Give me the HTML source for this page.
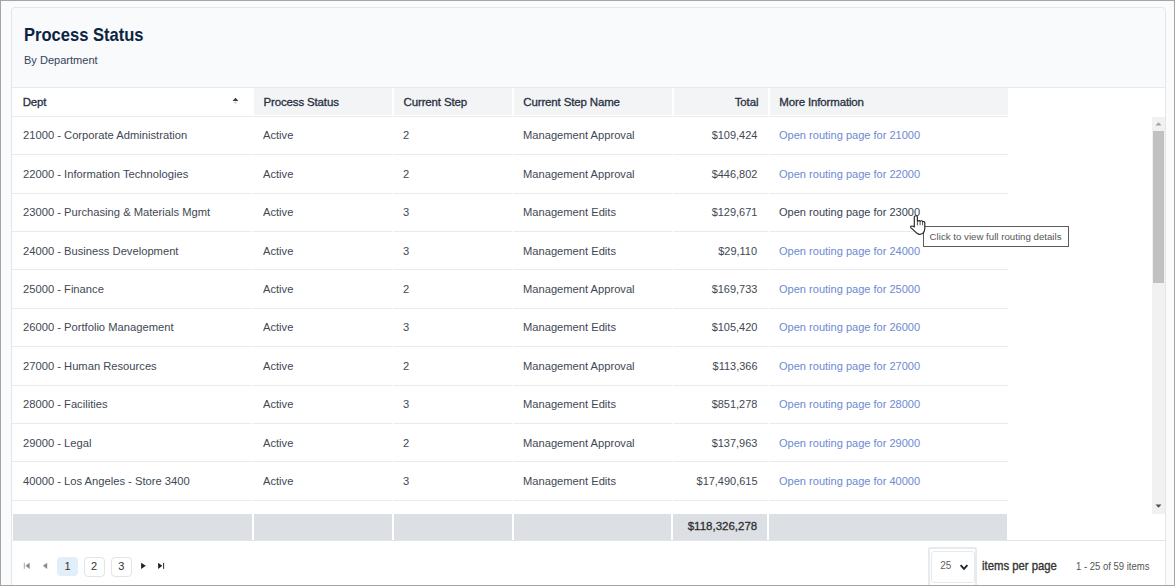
<!DOCTYPE html>
<html><head><meta charset="utf-8"><style>
html,body{margin:0;padding:0}
body{width:1175px;height:586px;position:relative;overflow:hidden;background:#fafbfc;font-family:"Liberation Sans",sans-serif}
.r{position:absolute}
.t{position:absolute;line-height:0;white-space:nowrap}
#frame{position:absolute;left:0;top:0;width:1175px;height:586px;box-sizing:border-box;border:1px solid #a4a4a4;pointer-events:none}
</style></head><body>
<div class="r" style="left:11px;top:7px;width:1155px;height:620px;border:1px solid #e3e6ea;border-radius:4px;background:#f9fafb;box-sizing:border-box"></div>
<div class="t" style="left:23.90px;top:34.72px;font-size:19px;color:#0c2442;font-weight:bold;transform:scaleX(0.87);transform-origin:left center;">Process Status</div>
<div class="t" style="left:24.20px;top:60.02px;font-size:11.5px;color:#33425a;transform:scaleX(0.96);transform-origin:left center;">By Department</div>
<div class="r" style="left:12px;top:87px;width:1153px;height:500px;background:#ffffff;"></div>
<div class="r" style="left:12px;top:87px;width:1153px;height:1px;background:#e8eaee;"></div>
<div class="r" style="left:254px;top:88px;width:138px;height:27px;background:#f3f4f6;"></div>
<div class="r" style="left:394px;top:88px;width:118px;height:27px;background:#f3f4f6;"></div>
<div class="r" style="left:514px;top:88px;width:158px;height:27px;background:#f3f4f6;"></div>
<div class="r" style="left:674px;top:88px;width:94px;height:27px;background:#f3f4f6;"></div>
<div class="r" style="left:770px;top:88px;width:238px;height:27px;background:#f3f4f6;"></div>
<div class="r" style="left:12px;top:116px;width:240px;height:1px;background:#e8eaee;"></div>
<div class="r" style="left:253px;top:116px;width:139px;height:1px;background:#e8eaee;"></div>
<div class="r" style="left:393px;top:116px;width:119px;height:1px;background:#e8eaee;"></div>
<div class="r" style="left:513px;top:116px;width:159px;height:1px;background:#e8eaee;"></div>
<div class="r" style="left:673px;top:116px;width:95px;height:1px;background:#e8eaee;"></div>
<div class="r" style="left:769px;top:116px;width:239px;height:1px;background:#e8eaee;"></div>
<div class="t" style="left:22.70px;top:101.62px;font-size:11.5px;color:#283040;letter-spacing:-0.15px;-webkit-text-stroke:0.3px #283040;">Dept</div>
<div class="t" style="left:263.50px;top:101.62px;font-size:11.5px;color:#283040;letter-spacing:-0.15px;-webkit-text-stroke:0.3px #283040;">Process Status</div>
<div class="t" style="left:403.60px;top:101.62px;font-size:11.5px;color:#283040;letter-spacing:-0.15px;-webkit-text-stroke:0.3px #283040;">Current Step</div>
<div class="t" style="left:523.30px;top:101.62px;font-size:11.5px;color:#283040;letter-spacing:-0.15px;-webkit-text-stroke:0.3px #283040;">Current Step Name</div>
<div class="t" style="right:416.70px;top:101.62px;font-size:11.5px;color:#283040;text-align:right;letter-spacing:-0.15px;-webkit-text-stroke:0.3px #283040;">Total</div>
<div class="t" style="left:779.30px;top:101.62px;font-size:11.5px;color:#283040;letter-spacing:-0.15px;-webkit-text-stroke:0.3px #283040;">More Information</div>
<svg class="r" style="left:231px;top:96px" width="9" height="10" viewBox="0 0 9 10"><path d="M1.6 5 L4.5 1.8 L7.4 5 Z" fill="#3a3a3a"/><path d="M2.2 5.7 L6.8 5.7 L4.5 8.2 Z" fill="#d6d6d6"/></svg>
<div class="r" style="left:12px;top:154px;width:240px;height:1px;background:#e8eaee;"></div>
<div class="r" style="left:253px;top:154px;width:139px;height:1px;background:#e8eaee;"></div>
<div class="r" style="left:393px;top:154px;width:119px;height:1px;background:#e8eaee;"></div>
<div class="r" style="left:513px;top:154px;width:159px;height:1px;background:#e8eaee;"></div>
<div class="r" style="left:673px;top:154px;width:95px;height:1px;background:#e8eaee;"></div>
<div class="r" style="left:769px;top:154px;width:239px;height:1px;background:#e8eaee;"></div>
<div class="t" style="left:22.70px;top:135.48px;font-size:11.6px;color:#414853;transform:scaleX(0.965);transform-origin:left center;">21000 - Corporate Administration</div>
<div class="t" style="left:262.50px;top:135.48px;font-size:11.6px;color:#414853;transform:scaleX(0.962);transform-origin:left center;">Active</div>
<div class="t" style="left:402.80px;top:135.48px;font-size:11.6px;color:#414853;transform:scaleX(0.962);transform-origin:left center;">2</div>
<div class="t" style="left:522.90px;top:135.48px;font-size:11.6px;color:#414853;transform:scaleX(0.962);transform-origin:left center;">Management Approval</div>
<div class="t" style="right:417.60px;top:135.48px;font-size:11.6px;color:#414853;text-align:right;transform:scaleX(0.945);transform-origin:right center;">$109,424</div>
<div class="t" style="left:778.60px;top:135.48px;font-size:11.6px;color:#6d8ad2;transform:scaleX(0.952);transform-origin:left center;">Open routing page for 21000</div>
<div class="r" style="left:12px;top:193px;width:240px;height:1px;background:#e8eaee;"></div>
<div class="r" style="left:253px;top:193px;width:139px;height:1px;background:#e8eaee;"></div>
<div class="r" style="left:393px;top:193px;width:119px;height:1px;background:#e8eaee;"></div>
<div class="r" style="left:513px;top:193px;width:159px;height:1px;background:#e8eaee;"></div>
<div class="r" style="left:673px;top:193px;width:95px;height:1px;background:#e8eaee;"></div>
<div class="r" style="left:769px;top:193px;width:239px;height:1px;background:#e8eaee;"></div>
<div class="t" style="left:22.70px;top:173.86px;font-size:11.6px;color:#414853;transform:scaleX(0.965);transform-origin:left center;">22000 - Information Technologies</div>
<div class="t" style="left:262.50px;top:173.86px;font-size:11.6px;color:#414853;transform:scaleX(0.962);transform-origin:left center;">Active</div>
<div class="t" style="left:402.80px;top:173.86px;font-size:11.6px;color:#414853;transform:scaleX(0.962);transform-origin:left center;">2</div>
<div class="t" style="left:522.90px;top:173.86px;font-size:11.6px;color:#414853;transform:scaleX(0.962);transform-origin:left center;">Management Approval</div>
<div class="t" style="right:417.60px;top:173.86px;font-size:11.6px;color:#414853;text-align:right;transform:scaleX(0.945);transform-origin:right center;">$446,802</div>
<div class="t" style="left:778.60px;top:173.86px;font-size:11.6px;color:#6d8ad2;transform:scaleX(0.952);transform-origin:left center;">Open routing page for 22000</div>
<div class="r" style="left:12px;top:231px;width:240px;height:1px;background:#e8eaee;"></div>
<div class="r" style="left:253px;top:231px;width:139px;height:1px;background:#e8eaee;"></div>
<div class="r" style="left:393px;top:231px;width:119px;height:1px;background:#e8eaee;"></div>
<div class="r" style="left:513px;top:231px;width:159px;height:1px;background:#e8eaee;"></div>
<div class="r" style="left:673px;top:231px;width:95px;height:1px;background:#e8eaee;"></div>
<div class="r" style="left:769px;top:231px;width:239px;height:1px;background:#e8eaee;"></div>
<div class="t" style="left:22.70px;top:212.24px;font-size:11.6px;color:#414853;transform:scaleX(0.965);transform-origin:left center;">23000 - Purchasing &amp; Materials Mgmt</div>
<div class="t" style="left:262.50px;top:212.24px;font-size:11.6px;color:#414853;transform:scaleX(0.962);transform-origin:left center;">Active</div>
<div class="t" style="left:402.80px;top:212.24px;font-size:11.6px;color:#414853;transform:scaleX(0.962);transform-origin:left center;">3</div>
<div class="t" style="left:522.90px;top:212.24px;font-size:11.6px;color:#414853;transform:scaleX(0.962);transform-origin:left center;">Management Edits</div>
<div class="t" style="right:417.60px;top:212.24px;font-size:11.6px;color:#414853;text-align:right;transform:scaleX(0.945);transform-origin:right center;">$129,671</div>
<div class="t" style="left:778.60px;top:212.24px;font-size:11.6px;color:#374253;transform:scaleX(0.952);transform-origin:left center;">Open routing page for 23000</div>
<div class="r" style="left:12px;top:269px;width:240px;height:1px;background:#e8eaee;"></div>
<div class="r" style="left:253px;top:269px;width:139px;height:1px;background:#e8eaee;"></div>
<div class="r" style="left:393px;top:269px;width:119px;height:1px;background:#e8eaee;"></div>
<div class="r" style="left:513px;top:269px;width:159px;height:1px;background:#e8eaee;"></div>
<div class="r" style="left:673px;top:269px;width:95px;height:1px;background:#e8eaee;"></div>
<div class="r" style="left:769px;top:269px;width:239px;height:1px;background:#e8eaee;"></div>
<div class="t" style="left:22.70px;top:250.62px;font-size:11.6px;color:#414853;transform:scaleX(0.965);transform-origin:left center;">24000 - Business Development</div>
<div class="t" style="left:262.50px;top:250.62px;font-size:11.6px;color:#414853;transform:scaleX(0.962);transform-origin:left center;">Active</div>
<div class="t" style="left:402.80px;top:250.62px;font-size:11.6px;color:#414853;transform:scaleX(0.962);transform-origin:left center;">3</div>
<div class="t" style="left:522.90px;top:250.62px;font-size:11.6px;color:#414853;transform:scaleX(0.962);transform-origin:left center;">Management Edits</div>
<div class="t" style="right:417.60px;top:250.62px;font-size:11.6px;color:#414853;text-align:right;transform:scaleX(0.945);transform-origin:right center;">$29,110</div>
<div class="t" style="left:778.60px;top:250.62px;font-size:11.6px;color:#6d8ad2;transform:scaleX(0.952);transform-origin:left center;">Open routing page for 24000</div>
<div class="r" style="left:12px;top:308px;width:240px;height:1px;background:#e8eaee;"></div>
<div class="r" style="left:253px;top:308px;width:139px;height:1px;background:#e8eaee;"></div>
<div class="r" style="left:393px;top:308px;width:119px;height:1px;background:#e8eaee;"></div>
<div class="r" style="left:513px;top:308px;width:159px;height:1px;background:#e8eaee;"></div>
<div class="r" style="left:673px;top:308px;width:95px;height:1px;background:#e8eaee;"></div>
<div class="r" style="left:769px;top:308px;width:239px;height:1px;background:#e8eaee;"></div>
<div class="t" style="left:22.70px;top:289.00px;font-size:11.6px;color:#414853;transform:scaleX(0.965);transform-origin:left center;">25000 - Finance</div>
<div class="t" style="left:262.50px;top:289.00px;font-size:11.6px;color:#414853;transform:scaleX(0.962);transform-origin:left center;">Active</div>
<div class="t" style="left:402.80px;top:289.00px;font-size:11.6px;color:#414853;transform:scaleX(0.962);transform-origin:left center;">2</div>
<div class="t" style="left:522.90px;top:289.00px;font-size:11.6px;color:#414853;transform:scaleX(0.962);transform-origin:left center;">Management Approval</div>
<div class="t" style="right:417.60px;top:289.00px;font-size:11.6px;color:#414853;text-align:right;transform:scaleX(0.945);transform-origin:right center;">$169,733</div>
<div class="t" style="left:778.60px;top:289.00px;font-size:11.6px;color:#6d8ad2;transform:scaleX(0.952);transform-origin:left center;">Open routing page for 25000</div>
<div class="r" style="left:12px;top:346px;width:240px;height:1px;background:#e8eaee;"></div>
<div class="r" style="left:253px;top:346px;width:139px;height:1px;background:#e8eaee;"></div>
<div class="r" style="left:393px;top:346px;width:119px;height:1px;background:#e8eaee;"></div>
<div class="r" style="left:513px;top:346px;width:159px;height:1px;background:#e8eaee;"></div>
<div class="r" style="left:673px;top:346px;width:95px;height:1px;background:#e8eaee;"></div>
<div class="r" style="left:769px;top:346px;width:239px;height:1px;background:#e8eaee;"></div>
<div class="t" style="left:22.70px;top:327.38px;font-size:11.6px;color:#414853;transform:scaleX(0.965);transform-origin:left center;">26000 - Portfolio Management</div>
<div class="t" style="left:262.50px;top:327.38px;font-size:11.6px;color:#414853;transform:scaleX(0.962);transform-origin:left center;">Active</div>
<div class="t" style="left:402.80px;top:327.38px;font-size:11.6px;color:#414853;transform:scaleX(0.962);transform-origin:left center;">3</div>
<div class="t" style="left:522.90px;top:327.38px;font-size:11.6px;color:#414853;transform:scaleX(0.962);transform-origin:left center;">Management Edits</div>
<div class="t" style="right:417.60px;top:327.38px;font-size:11.6px;color:#414853;text-align:right;transform:scaleX(0.945);transform-origin:right center;">$105,420</div>
<div class="t" style="left:778.60px;top:327.38px;font-size:11.6px;color:#6d8ad2;transform:scaleX(0.952);transform-origin:left center;">Open routing page for 26000</div>
<div class="r" style="left:12px;top:385px;width:240px;height:1px;background:#e8eaee;"></div>
<div class="r" style="left:253px;top:385px;width:139px;height:1px;background:#e8eaee;"></div>
<div class="r" style="left:393px;top:385px;width:119px;height:1px;background:#e8eaee;"></div>
<div class="r" style="left:513px;top:385px;width:159px;height:1px;background:#e8eaee;"></div>
<div class="r" style="left:673px;top:385px;width:95px;height:1px;background:#e8eaee;"></div>
<div class="r" style="left:769px;top:385px;width:239px;height:1px;background:#e8eaee;"></div>
<div class="t" style="left:22.70px;top:365.76px;font-size:11.6px;color:#414853;transform:scaleX(0.965);transform-origin:left center;">27000 - Human Resources</div>
<div class="t" style="left:262.50px;top:365.76px;font-size:11.6px;color:#414853;transform:scaleX(0.962);transform-origin:left center;">Active</div>
<div class="t" style="left:402.80px;top:365.76px;font-size:11.6px;color:#414853;transform:scaleX(0.962);transform-origin:left center;">2</div>
<div class="t" style="left:522.90px;top:365.76px;font-size:11.6px;color:#414853;transform:scaleX(0.962);transform-origin:left center;">Management Approval</div>
<div class="t" style="right:417.60px;top:365.76px;font-size:11.6px;color:#414853;text-align:right;transform:scaleX(0.945);transform-origin:right center;">$113,366</div>
<div class="t" style="left:778.60px;top:365.76px;font-size:11.6px;color:#6d8ad2;transform:scaleX(0.952);transform-origin:left center;">Open routing page for 27000</div>
<div class="r" style="left:12px;top:423px;width:240px;height:1px;background:#e8eaee;"></div>
<div class="r" style="left:253px;top:423px;width:139px;height:1px;background:#e8eaee;"></div>
<div class="r" style="left:393px;top:423px;width:119px;height:1px;background:#e8eaee;"></div>
<div class="r" style="left:513px;top:423px;width:159px;height:1px;background:#e8eaee;"></div>
<div class="r" style="left:673px;top:423px;width:95px;height:1px;background:#e8eaee;"></div>
<div class="r" style="left:769px;top:423px;width:239px;height:1px;background:#e8eaee;"></div>
<div class="t" style="left:22.70px;top:404.14px;font-size:11.6px;color:#414853;transform:scaleX(0.965);transform-origin:left center;">28000 - Facilities</div>
<div class="t" style="left:262.50px;top:404.14px;font-size:11.6px;color:#414853;transform:scaleX(0.962);transform-origin:left center;">Active</div>
<div class="t" style="left:402.80px;top:404.14px;font-size:11.6px;color:#414853;transform:scaleX(0.962);transform-origin:left center;">3</div>
<div class="t" style="left:522.90px;top:404.14px;font-size:11.6px;color:#414853;transform:scaleX(0.962);transform-origin:left center;">Management Edits</div>
<div class="t" style="right:417.60px;top:404.14px;font-size:11.6px;color:#414853;text-align:right;transform:scaleX(0.945);transform-origin:right center;">$851,278</div>
<div class="t" style="left:778.60px;top:404.14px;font-size:11.6px;color:#6d8ad2;transform:scaleX(0.952);transform-origin:left center;">Open routing page for 28000</div>
<div class="r" style="left:12px;top:461px;width:240px;height:1px;background:#e8eaee;"></div>
<div class="r" style="left:253px;top:461px;width:139px;height:1px;background:#e8eaee;"></div>
<div class="r" style="left:393px;top:461px;width:119px;height:1px;background:#e8eaee;"></div>
<div class="r" style="left:513px;top:461px;width:159px;height:1px;background:#e8eaee;"></div>
<div class="r" style="left:673px;top:461px;width:95px;height:1px;background:#e8eaee;"></div>
<div class="r" style="left:769px;top:461px;width:239px;height:1px;background:#e8eaee;"></div>
<div class="t" style="left:22.70px;top:442.52px;font-size:11.6px;color:#414853;transform:scaleX(0.965);transform-origin:left center;">29000 - Legal</div>
<div class="t" style="left:262.50px;top:442.52px;font-size:11.6px;color:#414853;transform:scaleX(0.962);transform-origin:left center;">Active</div>
<div class="t" style="left:402.80px;top:442.52px;font-size:11.6px;color:#414853;transform:scaleX(0.962);transform-origin:left center;">2</div>
<div class="t" style="left:522.90px;top:442.52px;font-size:11.6px;color:#414853;transform:scaleX(0.962);transform-origin:left center;">Management Approval</div>
<div class="t" style="right:417.60px;top:442.52px;font-size:11.6px;color:#414853;text-align:right;transform:scaleX(0.945);transform-origin:right center;">$137,963</div>
<div class="t" style="left:778.60px;top:442.52px;font-size:11.6px;color:#6d8ad2;transform:scaleX(0.952);transform-origin:left center;">Open routing page for 29000</div>
<div class="r" style="left:12px;top:500px;width:240px;height:1px;background:#e8eaee;"></div>
<div class="r" style="left:253px;top:500px;width:139px;height:1px;background:#e8eaee;"></div>
<div class="r" style="left:393px;top:500px;width:119px;height:1px;background:#e8eaee;"></div>
<div class="r" style="left:513px;top:500px;width:159px;height:1px;background:#e8eaee;"></div>
<div class="r" style="left:673px;top:500px;width:95px;height:1px;background:#e8eaee;"></div>
<div class="r" style="left:769px;top:500px;width:239px;height:1px;background:#e8eaee;"></div>
<div class="t" style="left:22.70px;top:480.90px;font-size:11.6px;color:#414853;transform:scaleX(0.965);transform-origin:left center;">40000 - Los Angeles - Store 3400</div>
<div class="t" style="left:262.50px;top:480.90px;font-size:11.6px;color:#414853;transform:scaleX(0.962);transform-origin:left center;">Active</div>
<div class="t" style="left:402.80px;top:480.90px;font-size:11.6px;color:#414853;transform:scaleX(0.962);transform-origin:left center;">3</div>
<div class="t" style="left:522.90px;top:480.90px;font-size:11.6px;color:#414853;transform:scaleX(0.962);transform-origin:left center;">Management Edits</div>
<div class="t" style="right:417.60px;top:480.90px;font-size:11.6px;color:#414853;text-align:right;transform:scaleX(0.945);transform-origin:right center;">$17,490,615</div>
<div class="t" style="left:778.60px;top:480.90px;font-size:11.6px;color:#6d8ad2;transform:scaleX(0.952);transform-origin:left center;">Open routing page for 40000</div>
<div class="r" style="left:13px;top:514px;width:239px;height:26px;background:#dcdfe4;"></div>
<div class="r" style="left:254px;top:514px;width:138px;height:26px;background:#dcdfe4;"></div>
<div class="r" style="left:394px;top:514px;width:118px;height:26px;background:#dcdfe4;"></div>
<div class="r" style="left:514px;top:514px;width:157px;height:26px;background:#dcdfe4;"></div>
<div class="r" style="left:673px;top:514px;width:94px;height:26px;background:#dcdfe4;"></div>
<div class="r" style="left:769px;top:514px;width:238px;height:26px;background:#dcdfe4;"></div>
<div class="t" style="right:417.80px;top:525.82px;font-size:11.5px;color:#2e2e2e;text-align:right;-webkit-text-stroke:0.28px #2e2e2e;">$118,326,278</div>
<div class="r" style="left:12px;top:540px;width:1153px;height:1px;background:#e2e5e9;"></div>
<div class="r" style="left:1152px;top:117px;width:13px;height:397px;background:#f1f1f1;"></div>
<svg class="r" style="left:1152px;top:117px" width="13" height="13" viewBox="0 0 13 13"><path d="M3.5 8.5 L6.5 5.3 L9.5 8.5 Z" fill="#a3a3a3"/></svg>
<div class="r" style="left:1153.4px;top:130.6px;width:10.4px;height:152.3px;background:#c1c1c1;"></div>
<svg class="r" style="left:1152px;top:500px" width="13" height="13" viewBox="0 0 13 13"><path d="M3.5 4.6 L9.5 4.6 L6.5 7.8 Z" fill="#505050"/></svg>
<svg class="r" style="left:22px;top:561px" width="10" height="10" viewBox="0 0 10 10"><path d="M2.3 1.8 V7.9" stroke="#9a9a9a" stroke-width="0.9"/><path d="M7.6 1.8 L3.5 4.85 L7.6 7.9 Z" fill="#8a8a8a"/></svg>
<svg class="r" style="left:41px;top:561px" width="10" height="10" viewBox="0 0 10 10"><path d="M6.2 1.8 L1.9 4.85 L6.2 7.9 Z" fill="#8a8a8a"/></svg>
<div class="r" style="left:57px;top:557px;width:21px;height:19px;background:#e3eefb;border-radius:4px"></div>
<div class="r" style="left:84px;top:557px;width:21px;height:19.5px;border:1px solid #e1e4e9;border-radius:4px;box-sizing:border-box;background:#fff"></div>
<div class="r" style="left:111px;top:557px;width:21px;height:19.5px;border:1px solid #e1e4e9;border-radius:4px;box-sizing:border-box;background:#fff"></div>
<div class="t" style="left:64.50px;top:566.29px;font-size:11px;color:#333;">1</div>
<div class="t" style="left:91.00px;top:566.29px;font-size:11px;color:#333;">2</div>
<div class="t" style="left:118.20px;top:566.29px;font-size:11px;color:#333;">3</div>
<svg class="r" style="left:139px;top:561px" width="10" height="10" viewBox="0 0 10 10"><path d="M2.1 1.8 L6.8 4.85 L2.1 7.9 Z" fill="#1e2128"/></svg>
<svg class="r" style="left:156px;top:561px" width="10" height="10" viewBox="0 0 10 10"><path d="M2.1 1.8 L6.3 4.85 L2.1 7.9 Z" fill="#1e2128"/><path d="M7.6 1.8 V7.9" stroke="#2a2d40" stroke-width="1.0"/></svg>
<div class="r" style="left:928px;top:547px;width:49px;height:45px;border:2px solid #e8ebee;border-radius:2px;box-sizing:border-box;background:#fff"></div>
<div class="r" style="left:931px;top:551px;width:44px;height:32px;border:1px solid #e6e9ed;border-radius:3px;box-sizing:border-box;background:#fff"></div>
<div class="t" style="left:940.30px;top:565.83px;font-size:10px;color:#5f5f5f;">25</div>
<svg class="r" style="left:958px;top:562px" width="12" height="10" viewBox="0 0 12 10"><path d="M2.6 3.2 L6 6.8 L9.4 3.2" stroke="#1c2430" stroke-width="1.9" fill="none"/></svg>
<div class="t" style="left:981.90px;top:565.56px;font-size:12.8px;color:#333;transform:scaleX(0.885);transform-origin:left center;-webkit-text-stroke:0.35px #333;">items per page</div>
<div class="t" style="left:1075.80px;top:566.63px;font-size:10px;color:#555;transform:scaleX(0.95);transform-origin:left center;">1 - 25 of 59 items</div>
<div class="r" style="left:923px;top:226px;width:146px;height:21px;border:1px solid #5c5c5c;box-sizing:border-box;background:#fff"></div>
<div class="t" style="left:929.60px;top:236.74px;font-size:9.7px;color:#575757;">Click to view full routing details</div>
<svg class="r" style="left:908px;top:213px" width="20" height="24" viewBox="0 0 20 24"><path d="M6.3 13.2 V4.1 Q6.3 2.7 7.85 2.7 Q9.4 2.7 9.4 4.1 V8.2 Q11.6 6.9 12.1 8.3 Q14.1 7.1 14.6 8.6 Q16.8 8 16.8 10 V15.2 Q16.8 18.9 14.6 20.6 Q12.6 21.7 10.6 21.1 Q8.9 20.6 7.4 18.9 L3.1 14.9 Q2.1 13.9 2.9 13.3 Q4.2 12.5 6.3 13.9 Z" fill="#fff" stroke="#262626" stroke-width="1.15" stroke-linejoin="round"/><path d="M9.4 8.2 V12.3 M12.1 8.3 V12.3 M14.6 8.6 V12.3" stroke="#3a3a3a" stroke-width="0.85"/></svg>
<div id="frame"></div>
</body></html>
